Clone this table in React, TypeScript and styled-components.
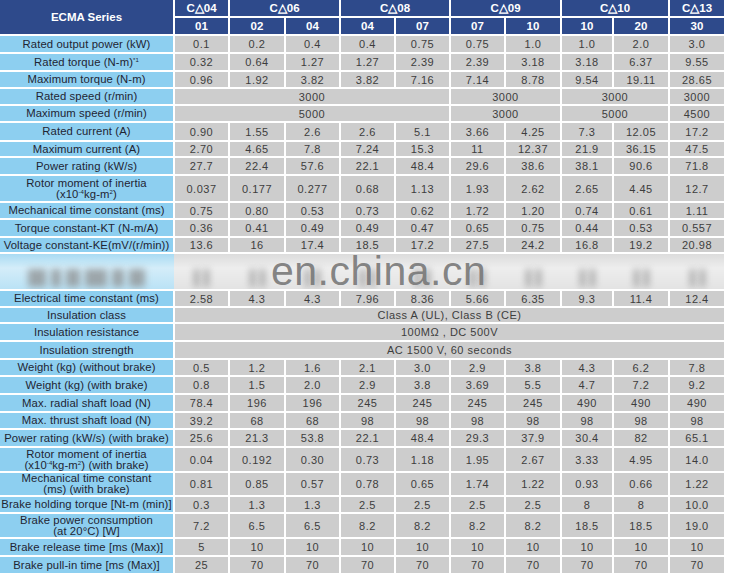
import React from 'react';
import styled, { createGlobalStyle } from 'styled-components';

const GlobalStyle = createGlobalStyle`
    body {
        margin: 0;
        background: #ffffff;
        font-family: "Liberation Sans", Arial, sans-serif;
    }
`;

const COLUMNS = '173px 53px 54px 53px 53px 53px 53px 54px 50px 54px 54px';

const Sheet = styled.div`
    width: 724px;
    display: flex;
    flex-direction: column;
    gap: 2px;
    background: #ffffff;
`;

const Header = styled.div`
    display: grid;
    grid-template-columns: ${COLUMNS};
    grid-template-rows: 16px 16px;
    gap: 2px;
`;

const HeadCell = styled.div<{ span?: number; rows?: number }>`
    grid-column: span ${({ span }) => span ?? 1};
    grid-row: span ${({ rows }) => rows ?? 1};
    background: #2e4a8b;
    color: #ffffff;
    font-weight: bold;
    font-size: 11.5px;
    display: flex;
    align-items: center;
    justify-content: center;
`;

const Row = styled.div<{ h: number }>`
    display: grid;
    grid-template-columns: ${COLUMNS};
    gap: 2px;
    height: ${({ h }) => h}px;
`;

const Label = styled.div`
    background: #8dcff0;
    color: #1f2533;
    font-size: 11.3px;
    line-height: 11px;
    letter-spacing: 0.1px;
    display: flex;
    flex-direction: column;
    align-items: center;
    justify-content: center;
    text-align: center;
    white-space: nowrap;

    sup {
        font-size: 6px;
        line-height: 0;
        vertical-align: 4px;
    }
`;

const Cell = styled.div<{ span?: number }>`
    grid-column: span ${({ span }) => span ?? 1};
    background: #cdcdcd;
    color: #3d3d3d;
    font-size: 11px;
    letter-spacing: 0.5px;
    display: flex;
    align-items: center;
    justify-content: center;
    white-space: nowrap;
`;

const Band = styled.div`
    position: relative;
    height: 35px;
    display: grid;
    grid-template-columns: ${COLUMNS};
    gap: 2px;
    background:
        linear-gradient(to bottom, rgba(255, 255, 255, 0) 0, rgba(255, 255, 255, 0.5) 40%, rgba(255, 255, 255, 0.2) 100%),
        linear-gradient(to right, #a9dbf3 0 174px, #dcdcdc 174px);
`;

const Smudge = styled.div`
    display: flex;
    align-items: flex-end;
    justify-content: center;
    gap: 5px;
    padding-bottom: 2px;
    overflow: hidden;
`;

const Streak = styled.div<{ w: number }>`
    width: ${({ w }) => w}px;
    height: 18px;
    background: #8a8a8a;
    filter: blur(3.5px);
    opacity: 0.7;
`;

const Watermark = styled.div`
    position: absolute;
    left: 271px;
    top: 1px;
    height: 33px;
    font-size: 41px;
    line-height: 33px;
    color: rgba(118, 118, 118, 0.9);
    letter-spacing: 0.5px;
    pointer-events: none;
`;

type Line = {
    label: React.ReactNode;
    h: number;
    values: (string | [string, number])[];
};

const two = (a: React.ReactNode, b: React.ReactNode) => (
    <>
        <span>{a}</span>
        <span>{b}</span>
    </>
);

const top: Line[] = [
    { label: 'Rated output power  (kW)', h: 16, values: ['0.1', '0.2', '0.4', '0.4', '0.75', '0.75', '1.0', '1.0', '2.0', '3.0'] },
    { label: <span>Rated torque (N-m)<sup>*1</sup></span>, h: 16, values: ['0.32', '0.64', '1.27', '1.27', '2.39', '2.39', '3.18', '3.18', '6.37', '9.55'] },
    { label: 'Maximum torque (N-m)', h: 15, values: ['0.96', '1.92', '3.82', '3.82', '7.16', '7.14', '8.78', '9.54', '19.11', '28.65'] },
    { label: 'Rated speed (r/min)', h: 15, values: [['3000', 5], ['3000', 2], ['3000', 2], '3000'] },
    { label: 'Maximum speed (r/min)', h: 15, values: [['5000', 5], ['3000', 2], ['5000', 2], '4500'] },
    { label: 'Rated current (A)', h: 17, values: ['0.90', '1.55', '2.6', '2.6', '5.1', '3.66', '4.25', '7.3', '12.05', '17.2'] },
    { label: 'Maximum current (A)', h: 14, values: ['2.70', '4.65', '7.8', '7.24', '15.3', '11', '12.37', '21.9', '36.15', '47.5'] },
    { label: 'Power rating (kW/s)', h: 16, values: ['27.7', '22.4', '57.6', '22.1', '48.4', '29.6', '38.6', '38.1', '90.6', '71.8'] },
    { label: two('Rotor moment of inertia', <>(x10<sup>-4</sup>kg-m<sup>2</sup>)</>), h: 25, values: ['0.037', '0.177', '0.277', '0.68', '1.13', '1.93', '2.62', '2.65', '4.45', '12.7'] },
    { label: 'Mechanical time constant (ms)', h: 15, values: ['0.75', '0.80', '0.53', '0.73', '0.62', '1.72', '1.20', '0.74', '0.61', '1.11'] },
    { label: 'Torque constant-KT (N-m/A)', h: 16, values: ['0.36', '0.41', '0.49', '0.49', '0.47', '0.65', '0.75', '0.44', '0.53', '0.557'] },
    { label: 'Voltage constant-KE(mV/(r/min))', h: 14, values: ['13.6', '16', '17.4', '18.5', '17.2', '27.5', '24.2', '16.8', '19.2', '20.98'] },
];

const bottom: Line[] = [
    { label: 'Electrical time constant (ms)', h: 15, values: ['2.58', '4.3', '4.3', '7.96', '8.36', '5.66', '6.35', '9.3', '11.4', '12.4'] },
    { label: 'Insulation class', h: 14, values: [['Class A (UL), Class B (CE)', 10]] },
    { label: 'Insulation resistance', h: 16, values: [['100MΩ , DC 500V', 10]] },
    { label: 'Insulation strength', h: 16, values: [['AC 1500 V, 60 seconds', 10]] },
    { label: 'Weight (kg) (without brake)', h: 15, values: ['0.5', '1.2', '1.6', '2.1', '3.0', '2.9', '3.8', '4.3', '6.2', '7.8'] },
    { label: 'Weight (kg) (with brake)', h: 16, values: ['0.8', '1.5', '2.0', '2.9', '3.8', '3.69', '5.5', '4.7', '7.2', '9.2'] },
    { label: 'Max. radial shaft load (N)', h: 16, values: ['78.4', '196', '196', '245', '245', '245', '245', '490', '490', '490'] },
    { label: 'Max. thrust shaft load (N)', h: 15, values: ['39.2', '68', '68', '98', '98', '98', '98', '98', '98', '98'] },
    { label: 'Power rating (kW/s) (with brake)', h: 16, values: ['25.6', '21.3', '53.8', '22.1', '48.4', '29.3', '37.9', '30.4', '82', '65.1'] },
    { label: two('Rotor moment of inertia', <>(x10<sup>-4</sup>kg-m<sup>2</sup>) (with brake)</>), h: 23, values: ['0.04', '0.192', '0.30', '0.73', '1.18', '1.95', '2.67', '3.33', '4.95', '14.0'] },
    { label: two('Mechanical time constant', '(ms) (with brake)'), h: 22, values: ['0.81', '0.85', '0.57', '0.78', '0.65', '1.74', '1.22', '0.93', '0.66', '1.22'] },
    { label: 'Brake holding torque [Nt-m (min)]', h: 15, values: ['0.3', '1.3', '1.3', '2.5', '2.5', '2.5', '2.5', '8', '8', '10.0'] },
    { label: two('Brake power consumption', '(at 20°C) [W]'), h: 23, values: ['7.2', '6.5', '6.5', '8.2', '8.2', '8.2', '8.2', '18.5', '18.5', '19.0'] },
    { label: 'Brake release time [ms (Max)]', h: 16, values: ['5', '10', '10', '10', '10', '10', '10', '10', '10', '10'] },
    { label: 'Brake pull-in time [ms (Max)]', h: 16, values: ['25', '70', '70', '70', '70', '70', '70', '70', '70', '70'] },
];

const groups: [string, number][] = [
    ['C△04', 1], ['C△06', 2], ['C△08', 2], ['C△09', 2], ['C△10', 2], ['C△13', 1],
];
const models = ['01', '02', '04', '04', '07', '07', '10', '10', '20', '30'];

const renderLine = (line: Line, i: number) => (
    <Row key={i} h={line.h}>
        <Label>{line.label}</Label>
        {line.values.map((v, j) =>
            typeof v === 'string'
                ? <Cell key={j}>{v}</Cell>
                : <Cell key={j} span={v[1]}>{v[0]}</Cell>
        )}
    </Row>
);

export default function App() {
    return (
        <>
            <GlobalStyle />
            <Sheet>
                <Header>
                    <HeadCell rows={2}>ECMA Series</HeadCell>
                    {groups.map(([name, span]) => <HeadCell key={name} span={span}>{name}</HeadCell>)}
                    {models.map((m, i) => <HeadCell key={i}>{m}</HeadCell>)}
                </Header>
                {top.map(renderLine)}
                <Band>
                    <Smudge>
                        {[18, 10, 14, 22, 12, 16].map((w, i) => <Streak key={i} w={w} />)}
                    </Smudge>
                    {models.map((_, i) => (
                        <Smudge key={i}>
                            <Streak w={5} />
                            <Streak w={5} />
                        </Smudge>
                    ))}
                    <Watermark>en.china.cn</Watermark>
                </Band>
                {bottom.map(renderLine)}
            </Sheet>
        </>
    );
}
